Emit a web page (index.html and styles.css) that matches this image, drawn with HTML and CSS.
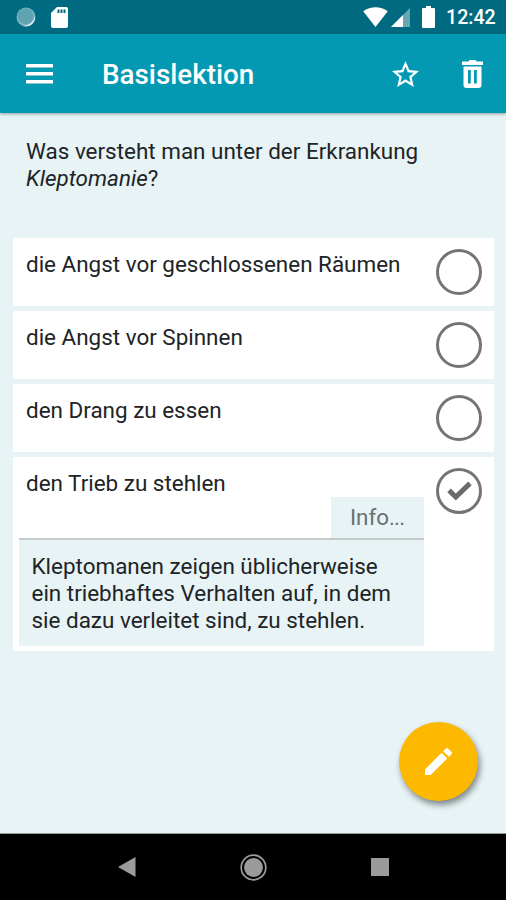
FILE: index.html
```html
<!DOCTYPE html>
<html lang="de">
<head>
<meta charset="utf-8">
<title>Basislektion</title>
<link rel="stylesheet" href="styles.css">
</head>
<body>
<div class="screen">
  <div class="statusbar">
    <svg class="sync" width="20" height="20" viewBox="0 0 20 20"><circle cx="10" cy="10" r="9.5" fill="#82b5c0"/><circle cx="9.6" cy="9.2" r="8" fill="#5fa3b0"/><path d="M19 9.5A9.3 9.3 0 0 1 7.5 19C13 18.7 17.7 15.5 19 9.5Z" fill="#fff"/></svg>
    <svg class="sd" width="17" height="21" viewBox="0 0 17 21"><path d="M6 0H15Q17 0 17 2V19Q17 21 15 21H2Q0 21 0 19V6Z" fill="#fff"/><path d="M6.5 2.5h2v3.5h-2zM9.5 2.5h2v3.5h-2zM12.5 2.5h2v3.5h-2z" fill="#006b80"/></svg>
    <span class="spacer"></span>
    <svg class="wifi" width="25" height="20" viewBox="0 0 25 20"><path d="M0.2 4.3C7.5 -1.2 17.5 -1.2 24.8 4.3L12.5 20Z" fill="#fff"/></svg>
    <svg class="signal" width="19" height="19" viewBox="0 0 19 19"><path d="M19 0V19H0Z" fill="#65a6b3"/><path d="M12 7V19H0Z" fill="#fff"/></svg>
    <svg class="battery" width="13" height="22" viewBox="0 0 13 22"><path d="M4 0H9V2H12Q13 2 13 3V21Q13 22 12 22H1Q0 22 0 21V3Q0 2 1 2H4Z" fill="#fff"/></svg>
    <span class="clock">12:42</span>
  </div>
  <header class="appbar">
    <svg class="menu" width="27" height="20" viewBox="0 0 27 20"><path d="M0 0H27V3.4H0ZM0 8H27V11.4H0ZM0 16H27V19.4H0Z" fill="#fff"/></svg>
    <h1 class="title">Basislektion</h1>
    <span class="spacer"></span>
    <svg class="star" width="27" height="26" viewBox="2 2 20 19" preserveAspectRatio="none"><path fill="#fff" d="M22 9.24l-7.19-.62L12 2 9.19 8.63 2 9.24l5.46 4.73L5.82 21 12 17.27 18.18 21l-1.63-7.03L22 9.24zM12 15.4l-3.76 2.27 1-4.28-3.32-2.88 4.38-.38L12 6.1l1.71 4.04 4.38.38-3.32 2.88 1 4.28L12 15.4z"/></svg>
    <svg class="trash" width="21" height="28" viewBox="0 0 21 28"><path fill="#fff" fill-rule="evenodd" d="M0 1.5H6.5L7.5 0H13.5L14.5 1.5H21V5H0ZM1.5 6.5H19.5V25Q19.5 28 16.5 28H4.5Q1.5 28 1.5 25ZM6 10V23.5H8.8V10ZM12 10V23.5H14.8V10Z"/></svg>
  </header>
  <main class="content">
    <p class="question">Was versteht man unter der Erkrankung<br><em>Kleptomanie</em>?</p>
    <div class="answers">
      <div class="answer"><span class="label">die Angst vor geschlossenen Räumen</span><span class="mark"></span></div>
      <div class="answer"><span class="label">die Angst vor Spinnen</span><span class="mark"></span></div>
      <div class="answer"><span class="label">den Drang zu essen</span><span class="mark"></span></div>
      <div class="answer open">
        <div class="body">
          <span class="label">den Trieb zu stehlen</span>
          <span class="tab">Info<span class="dots">...</span></span>
          <p class="info">Kleptomanen zeigen üblicherweise<br>ein triebhaftes Verhalten auf, in dem<br>sie dazu verleitet sind, zu stehlen.</p>
        </div>
        <span class="mark"><svg width="25" height="20" viewBox="0 0 25 20"><path d="M2 9.4L8.8 16L23 2.4" fill="none" stroke="#6b6b6b" stroke-width="5"/></svg></span>
      </div>
    </div>
    <div class="fab"><svg width="27" height="27" viewBox="3 3 18 18"><path fill="#fff" d="M3 17.25V21h3.75L17.81 9.94l-3.75-3.75L3 17.25zM20.71 7.04c.39-.39.39-1.02 0-1.41l-2.34-2.34c-.39-.39-1.02-.39-1.41 0l-1.83 1.83 3.75 3.75 1.83-1.83z"/></svg></div>
  </main>
  <nav class="navbar">
    <svg width="18" height="20" viewBox="0 0 18 20"><path d="M0 10L17.5 0V20Z" fill="#9b9b9b"/></svg>
    <svg width="27" height="27" viewBox="0 0 27 27"><circle cx="13.5" cy="13.5" r="12.3" fill="none" stroke="#9b9b9b" stroke-width="1.7"/><circle cx="13.5" cy="13.5" r="9.4" fill="#9b9b9b"/></svg>
    <svg width="18" height="18" viewBox="0 0 18 18"><path d="M0 0H18V18H0Z" fill="#9b9b9b"/></svg>
  </nav>
</div>
</body>
</html>
```
FILE: styles.css
```css
* { box-sizing: border-box; }
body { margin: 0; font-family: Roboto, sans-serif; color: #202426; }
svg { display: block; flex: none; }
.screen { width: 506px; height: 900px; display: flex; flex-direction: column; background: #e7f3f5; overflow: hidden; }
.spacer { flex: 1; }

.statusbar { height: 34px; flex: none; background: #006b80; display: flex; align-items: flex-start; padding: 7px 11px 0 16px; color: #fff; }
.sd { margin-left: 15px; }
.signal { margin: 1px 0 0 3px; }
.battery { margin: -1px 0 0 12px; }
.clock { width: 49px; margin-left: 11px; font-size: 19.6px; line-height: 22px; font-weight: 500; white-space: nowrap; }

.appbar { height: 79px; flex: none; background: #0499b2; display: flex; align-items: center; padding: 0 23px 0 26px; box-shadow: 0 1px 3px rgba(0, 0, 0, .35); }
.title { margin: 2px 0 0 49px; font-size: 27.8px; line-height: 32px; font-weight: 500; color: #fff; }
.trash { margin: 1px 0 0 43px; }

.content { flex: 1; display: flex; flex-direction: column; padding: 25px 12px 0 13px; font-size: 22.45px; line-height: 27px; }
.question { margin: 0 0 46px 13px; white-space: nowrap; }
.answers { display: flex; flex-direction: column; gap: 5px; }
.answer { height: 68px; background: #fff; display: flex; justify-content: space-between; padding: 12px 12px 0 13px; }
.label { white-space: nowrap; margin-top: 1px; }
.mark { width: 46px; height: 46px; flex: none; border: 3px solid #747474; border-radius: 50%; margin-top: -1px; display: flex; align-items: center; justify-content: center; }
.open { height: 194px; padding-left: 6px; }
.body { width: 405px; display: flex; flex-direction: column; }
.open .label { margin-left: 7px; }
.tab { align-self: flex-end; width: 93px; height: 41px; background: #e7f3f5; color: #6b7072; padding: 7px 0 0 19px; }
.dots { letter-spacing: -.9px; }
.info { margin: 0; height: 108px; border-top: 2px solid #c3caca; background: #e7f3f5; padding: 13px 0 0 12.5px; white-space: nowrap; }
.fab { width: 79px; height: 79px; margin: 71px 16px 0 0; align-self: flex-end; border-radius: 50%; background: #fdb900; box-shadow: 2px 4px 6px rgba(0, 0, 0, .45); display: flex; align-items: center; justify-content: center; }

.navbar { height: 67px; flex: none; background: #000; border-top: 1px solid #8e9698; display: flex; align-items: center; justify-content: space-between; padding: 0 117px 0 118px; }
```
